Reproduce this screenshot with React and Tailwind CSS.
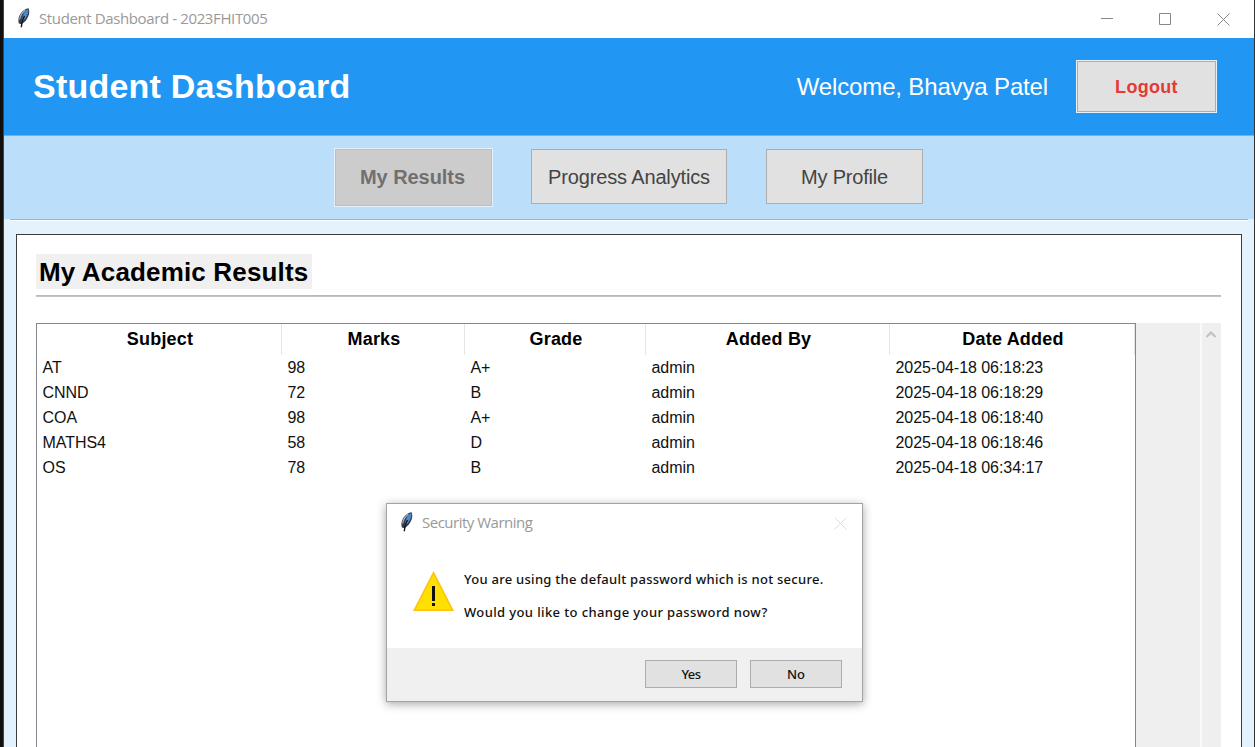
import React from "react";

const rows = [
  ["AT", "98", "A+", "admin", "2025-04-18 06:18:23"],
  ["CNND", "72", "B", "admin", "2025-04-18 06:18:29"],
  ["COA", "98", "A+", "admin", "2025-04-18 06:18:40"],
  ["MATHS4", "58", "D", "admin", "2025-04-18 06:18:46"],
  ["OS", "78", "B", "admin", "2025-04-18 06:34:17"],
];

const columns = ["Subject", "Marks", "Grade", "Added By", "Date Added"];
const tableGrid = "grid grid-cols-[245px_183px_181px_244px_245px]";

function Feather({ className }) {
  return (
    <svg className={className} width="14" height="20" viewBox="0 0 14 20">
      <path d="M11.600.3C8 .6 4.300 3.600 2.500 7.500 1.300 10.200 1 13.200 1.900 15.600l2.600.6c3.200-1.900 6.100-5.200 7.300-9.200C12.500 4.600 12.400 2.100 11.600.3z" fill="#343c49" />
      <path d="M11.200 1.300C9 2 7.200 4.200 6.200 7 5.300 9.400 4.700 11.800 4.600 14.200c2.500-1.800 5-4.700 6.100-7.900.6-1.800.8-3.600.5-5z" fill="#4a88d2" />
      <path d="M8.300 2.300C5.400 4.300 3.300 7.500 2.600 11.500" stroke="#a9b7c6" strokeWidth="1.200" fill="none" />
      <path d="M7.500 8C6 10.500 4.900 13.500 4.300 19.300" stroke="#11151b" strokeWidth="1.400" fill="none" />
    </svg>
  );
}

function Cross({ className }) {
  return (
    <svg className={className} width="13" height="13" viewBox="0 0 13 13" fill="none" stroke="currentColor">
      <path d="M.5.5l12 12M12.500.5l-12 12" />
    </svg>
  );
}

function TitleBar() {
  return (
    <div className="flex h-[38px] shrink-0 items-center bg-white pl-[13px] pr-[24px] text-[#999]">
      <Feather className="-mt-0.5" />
      <span className="ml-[8px] whitespace-nowrap pb-[2px] font-['Open_Sans',sans-serif] text-[15px] leading-5 tracking-[-0.38px]">
        Student Dashboard - 2023FHIT005
      </span>
      <div className="ml-auto flex items-center gap-[46px] text-[#888]">
        <svg width="12" height="12" viewBox="0 0 12 12" stroke="currentColor"><path d="M0 5.500h12" /></svg>
        <svg width="12" height="12" viewBox="0 0 12 12" fill="none" stroke="currentColor"><path d="M.5.5h11v11H.5z" /></svg>
        <Cross />
      </div>
    </div>
  );
}

function Header() {
  return (
    <header className="flex h-[98px] shrink-0 items-center border-b border-[#64b8f8] bg-[#2196f3] pl-[29px] pr-[37px] text-white">
      <h1 className="whitespace-nowrap pb-px text-[34px] font-bold tracking-[0.23px]">Student Dashboard</h1>
      <span className="ml-auto whitespace-nowrap text-[24px] tracking-[-0.15px]">Welcome, Bhavya Patel</span>
      <button className="ml-[28px] h-[53px] w-[141px] border border-[#e8f1f8] bg-[#e1e1e1] pt-[2px] text-[18px] font-bold tracking-[0.3px] text-[#e53935] outline outline-1 -outline-offset-2 outline-[#adadad]">
        Logout
      </button>
    </header>
  );
}

function NavBar() {
  return (
    <nav className="flex h-[83px] shrink-0 items-center justify-center bg-[#bbdefb] text-[20px] text-[#444]">
      <button className="mb-px mr-[38px] h-[59px] w-[159px] border border-[#e4f1fc] bg-[#ccc] pb-px pr-[2px] font-bold tracking-[-0.05px] text-[#707070] outline outline-1 -outline-offset-2 outline-[#bfbfbf]">
        My Results
      </button>
      <button className="mb-[2px] mr-[39px] h-[55px] w-[196px] whitespace-nowrap border border-[#adadad] bg-[#e1e1e1] tracking-[-0.15px]">
        Progress Analytics
      </button>
      <button className="mb-[2px] mr-px h-[55px] w-[157px] border border-[#adadad] bg-[#e1e1e1] tracking-[-0.2px]">My Profile</button>
    </nav>
  );
}

function ResultsTable() {
  return (
    <div className="flex flex-1">
      <div className="w-[1100px] shrink-0 border-x border-t border-[#828790] bg-white">
        <div className={`${tableGrid} h-[31px] text-[18px] font-bold text-black`}>
          {columns.map((name) => (
            <div key={name} className="flex items-center justify-center whitespace-nowrap border-r border-[#e5e5e5] pl-[2px] tracking-[0.2px]">
              {name}
            </div>
          ))}
        </div>
        {rows.map((row) => (
          <div key={row[0]} className={`${tableGrid} h-[25px] text-[16px] leading-[25px] tracking-[-0.05px] text-[#111]`}>
            {row.map((cell, i) => (
              <div key={i} className="whitespace-nowrap pl-[5.5px]">{cell}</div>
            ))}
          </div>
        ))}
      </div>
      <div className="w-[64px] shrink-0 bg-[#efefef]" />
      <div className="w-[21px] shrink-0 border-l-2 border-[#f9f9f9] bg-[#efefef] pl-[3px] pt-[7px]">
        <svg width="12" height="9" viewBox="0 0 12 9" fill="none" stroke="#bfbfbf" strokeWidth="2">
          <path d="M1.500 7L6 2.500 10.500 7" />
        </svg>
      </div>
    </div>
  );
}

function WarningDialog() {
  return (
    <div className="absolute left-[386px] top-[503px] flex h-[199px] w-[477px] flex-col border border-[#a3a3a3] bg-white font-['Open_Sans',sans-serif] shadow-[0_2px_9px_rgba(0,0,0,0.35)]">
      <div className="flex h-[38px] items-center pl-[13px] pr-[15px]">
        <Feather className="-mt-0.5" />
        <span className="ml-[8px] pb-[2px] text-[15px] leading-5 tracking-[-0.5px] text-[#999]">Security Warning</span>
        <Cross className="ml-auto text-[#ddd]" />
      </div>
      <div className="flex flex-1 pl-[26px]">
        <svg className="mt-[29px]" width="41" height="41" viewBox="0 0 41 41">
          <path d="M20.500 0L41 40H0z" fill="#ffc20e" />
          <path d="M20.500 3.500L38.500 38.500H2.500z" fill="#ffe000" />
          <path d="M19 15h3v15h-3zM19 32h3v3h-3z" fill="#111" />
        </svg>
        <div className="ml-[10px] mt-[27px] whitespace-nowrap font-['Noto_Sans',sans-serif] text-[13px] font-medium leading-[20px] text-[#111]">
          <p className="tracking-[0.27px]">You are using the default password which is not secure.</p>
          <p className="mt-[13px] tracking-[0.38px]">Would you like to change your password now?</p>
        </div>
      </div>
      <div className="flex h-[53px] items-start justify-end gap-[13px] bg-[#f0f0f0] pr-[20px] pt-[12px] font-['Noto_Sans',sans-serif] text-[13px] font-medium text-[#111]">
        <button className="h-[28px] w-[92px] border border-[#adadad] bg-[#e1e1e1] pt-px tracking-[-0.5px]">Yes</button>
        <button className="h-[28px] w-[92px] border border-[#adadad] bg-[#e1e1e1] pt-px">No</button>
      </div>
    </div>
  );
}

export default function App() {
  return (
    <div className="relative flex h-[747px] w-[1255px] overflow-hidden bg-[#e3f2fd] font-['Liberation_Sans',Arial,sans-serif]">
      <div className="w-[4px] shrink-0 border-r border-[#444] bg-[#12100f]" />
      <div className="flex w-[1250px] shrink-0 flex-col">
        <TitleBar />
        <Header />
        <NavBar />
        <div className="mx-[6px] h-[2px] shrink-0 border-b border-t border-b-white border-t-[#b0b0b0]" />
        <main className="mx-[12px] mt-[13px] flex flex-1 flex-col border-x border-t border-[#3c3c3c] bg-white pl-[19px] pr-[20px] pt-[19px]">
          <h2 className="flex h-[35px] w-[276px] items-center whitespace-nowrap bg-[#f0f0f0] pl-[3px] pt-px text-[26px] font-bold tracking-[0.16px] text-black">
            My Academic Results
          </h2>
          <div className="mb-[26px] mt-[6px] h-[2px] border-b border-t border-b-[#c4c4c4] border-t-[#bababa]" />
          <ResultsTable />
        </main>
      </div>
      <div className="w-px shrink-0 bg-[#333]" />
      <WarningDialog />
    </div>
  );
}
